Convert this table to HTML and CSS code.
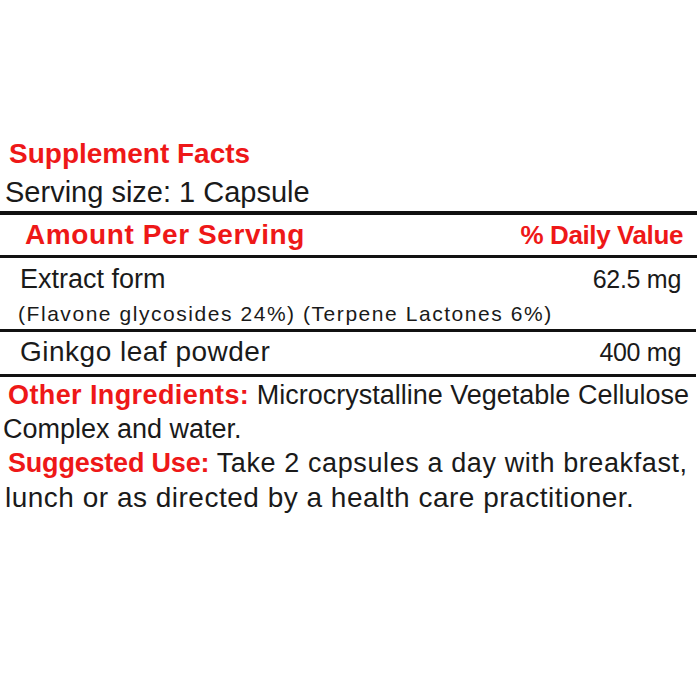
FILE: index.html
```html
<!DOCTYPE html>
<html lang="en">
<head>
<meta charset="utf-8">
<title>Supplement Facts</title>
<link rel="stylesheet" href="styles.css">
</head>
<body>
<div class="label">
  <div class="title">Supplement Facts</div>
  <div class="serving">Serving size: 1 Capsule</div>
  <div class="head-row">
    <span class="head-left">Amount Per Serving</span>
    <span class="head-right">% Daily Value</span>
  </div>
  <div class="row row-extract">
    <div class="row-main">
      <span class="name">Extract form</span>
      <span class="amount">62.5 mg</span>
    </div>
    <div class="sub">(Flavone glycosides 24%) (Terpene Lactones 6%)</div>
  </div>
  <div class="row row-ginkgo">
    <div class="row-main">
      <span class="name name-ginkgo">Ginkgo leaf powder</span>
      <span class="amount">400 mg</span>
    </div>
  </div>
  <div class="notes">
    <div class="line line-1"><span class="lbl">Other Ingredients:</span> Microcrystalline Vegetable Cellulose</div>
    <div class="line line-2">Complex and water.</div>
    <div class="line line-3"><span class="lbl lbl-use">Suggested Use:</span> <span class="use-text">Take 2 capsules a day with breakfast,</span></div>
    <div class="line line-4">lunch or as directed by a health care practitioner.</div>
  </div>
</div>
</body>
</html>
```
FILE: styles.css
```css
html, body {
  margin: 0;
  padding: 0;
  background: #ffffff;
}

body {
  width: 700px;
  height: 700px;
  overflow: hidden;
  font-family: "Liberation Sans", Arial, sans-serif;
  color: #1a1a1a;
}

.label {
  padding-top: 134px;
}

.title {
  font-size: 28px;
  font-weight: bold;
  line-height: 39px;
  color: #ee1818;
  padding-left: 9px;
}

.serving {
  font-size: 29px;
  line-height: 38px;
  padding-left: 5px;
}

.head-row {
  display: flex;
  justify-content: space-between;
  align-items: baseline;
  border-top: 4px solid #111;
  border-bottom: 3px solid #111;
  margin-right: 3px;
  height: 40px;
  line-height: 40px;
  color: #ee1818;
  font-weight: bold;
  padding: 0 14px 0 25px;
}

.head-left {
  font-size: 28px;
  letter-spacing: 0.6px;
}

.head-right {
  font-size: 26px;
  letter-spacing: -0.4px;
}

.row {
  border-bottom: 3px solid #111;
  margin-right: 4px;
}

.row-main {
  display: flex;
  justify-content: space-between;
  align-items: baseline;
  padding: 0 15px 0 20px;
}

.row-extract {
  padding-top: 5px;
}

.row-extract .row-main {
  line-height: 32px;
}

.name {
  font-size: 27px;
}

.name-ginkgo {
  font-size: 28px;
  letter-spacing: 0.5px;
}

.amount {
  font-size: 25px;
  letter-spacing: -0.3px;
}

.sub {
  font-size: 21px;
  line-height: 30px;
  margin-top: 4px;
  padding-left: 18px;
  letter-spacing: 1.55px;
}

.row-ginkgo .row-main {
  line-height: 40px;
  padding-bottom: 2px;
}

.notes {
  padding-top: 1px;
}

.line {
  font-size: 27px;
  line-height: 34px;
  white-space: nowrap;
}

.lbl {
  color: #ee1818;
  font-weight: bold;
  letter-spacing: 0.4px;
}

.lbl-use {
  letter-spacing: -0.2px;
}

.line-1 {
  padding-left: 8px;
}

.line-2 {
  padding-left: 3px;
}

.line-3 {
  padding-left: 8px;
}

.use-text {
  letter-spacing: 0.6px;
}

.line-4 {
  padding-left: 5px;
  font-size: 28px;
  line-height: 36px;
  letter-spacing: 0.5px;
}
```
